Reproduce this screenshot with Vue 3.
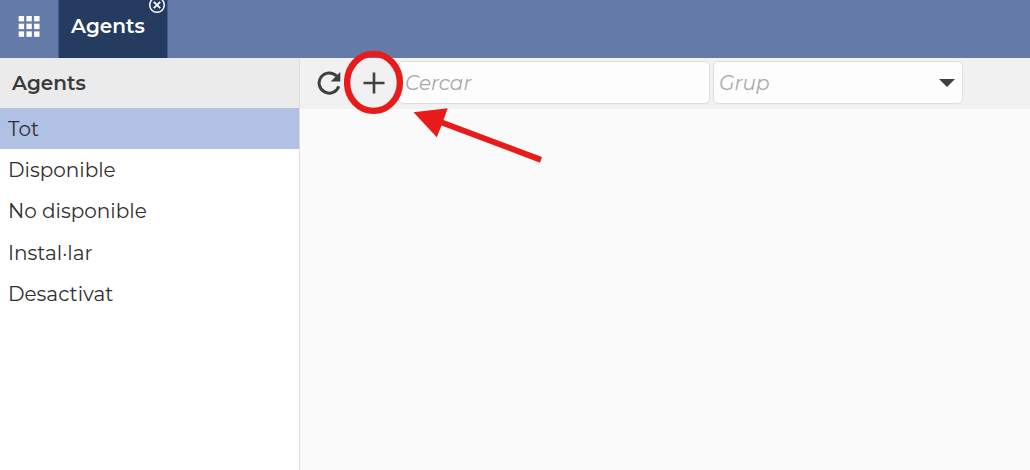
<script setup>
import { ref } from 'vue'

const filters = ['Tot', 'Disponible', 'No disponible', 'Instal·lar', 'Desactivat']
const active = ref('Tot')
const search = ref('')
const group = ref('')
const cells = [0, 7.7, 15.4]
</script>

<template>
  <div class="app">
    <header class="topbar">
      <button class="menu" type="button" aria-label="Menu">
        <svg width="22" height="22" viewBox="0 0 22 22" fill="#fff">
          <template v-for="y in cells" :key="y">
            <rect v-for="x in cells" :key="x" :x="x + 0.7" :y="y" width="5.4" height="5.4" />
          </template>
        </svg>
      </button>
      <div class="tab">
        <button class="tab-label" type="button">Agents</button>
        <button class="close" type="button" aria-label="Close">
          <svg width="18" height="18" viewBox="0 0 18 18" fill="none" stroke="#fff">
            <circle cx="9" cy="9" r="7.3" stroke-width="1.5" />
            <path d="M5.8 5.8L12.2 12.2M12.2 5.8L5.8 12.2" stroke-width="1.8" />
          </svg>
        </button>
      </div>
    </header>
    <div class="body">
      <aside class="sidebar">
        <h1 class="title">Agents</h1>
        <ul class="filters">
          <li v-for="f in filters" :key="f">
            <button type="button" class="filter" :class="{ active: f === active }" @click="active = f">{{ f }}</button>
          </li>
        </ul>
      </aside>
      <main class="main">
        <div class="toolbar">
          <button class="tool" type="button" aria-label="Refresh">
            <svg width="24" height="24" viewBox="0 0 24 24">
              <path d="M19.6 5.1A10.1 10.1 0 1 0 21.8 15.2" fill="none" stroke="#404040" stroke-width="3" />
              <path d="M23.3 1V10.6H13.7Z" fill="#404040" />
            </svg>
          </button>
          <div class="add">
            <button class="tool" type="button" aria-label="Add">
              <svg width="22" height="22" viewBox="0 0 22 22">
                <path d="M11 0.5V21.5M0.5 11H21.5" stroke="#404040" stroke-width="2.6" />
              </svg>
            </button>
            <svg class="callout" width="200" height="114" viewBox="0 0 200 114">
              <ellipse cx="29.5" cy="32.4" rx="26.4" ry="28.5" fill="none" stroke="#e81b1b" stroke-width="6.4" />
              <path d="M69.5 62.2L103.7 58.3L99.5 70L198 107L196 112.7L97.5 75.5L92.8 87.3Z" fill="#e81b1b" />
            </svg>
          </div>
          <input v-model="search" class="field search" type="text" placeholder="Cercar" aria-label="Cercar" />
          <div class="group">
            <select v-model="group" class="field select" aria-label="Grup">
              <option value="">Grup</option>
            </select>
            <svg class="caret" width="16" height="8" viewBox="0 0 16 8">
              <path d="M0 0H16L8 8Z" fill="#404040" />
            </svg>
          </div>
        </div>
      </main>
    </div>
  </div>
</template>

<style>
body {
  margin: 0;
}
</style>

<style scoped>
.app {
  display: flex;
  flex-direction: column;
  min-height: 100vh;
  background: #fafafa;
  color: #303030;
  font-family: Montserrat, Inter, "Open Sans", sans-serif;
  font-size: 20px;
}
button {
  margin: 0;
  padding: 0;
  border: 0;
  background: none;
  color: inherit;
  font: inherit;
  cursor: pointer;
}
svg {
  display: block;
}
.topbar {
  display: flex;
  height: 58px;
  background: #647aa9;
}
.menu {
  display: flex;
  align-items: center;
  justify-content: center;
  width: 58px;
  padding-bottom: 4px;
}
.tab {
  position: relative;
  display: flex;
  box-sizing: border-box;
  border: solid #3e5e97;
  border-width: 0 1px;
  background: #253b60;
}
.tab-label {
  padding: 0 22px 6px 12px;
  color: #fff;
  font-weight: 600;
}
.close {
  position: absolute;
  top: -4px;
  right: 1px;
}
.body {
  display: flex;
  flex: 1;
}
.sidebar {
  box-sizing: border-box;
  width: 300px;
  flex: none;
  border-right: 1px solid #dedede;
  background: #fff;
}
.title {
  margin: 0;
  padding: 0 12px;
  background: #ebebeb;
  color: #3a3a3a;
  font-size: 20px;
  font-weight: 600;
  line-height: 50px;
}
.filters {
  display: grid;
  grid-auto-rows: 1fr;
  height: 207px;
  margin: 0;
  padding: 0;
  list-style: none;
}
.filters li {
  display: flex;
}
.filter {
  flex: 1;
  padding: 0 8px;
  text-align: left;
}
.active {
  background: #b0c1e5;
}
.main {
  flex: 1;
  min-width: 0;
}
.toolbar {
  display: flex;
  align-items: center;
  padding: 3px 67px 5px 6px;
  background: #f1f1f1;
}
.tool {
  display: flex;
  align-items: center;
  justify-content: center;
  width: 45px;
  height: 43px;
}
.add {
  position: relative;
}
.callout {
  position: absolute;
  top: -11px;
  left: -7px;
  z-index: 1;
  pointer-events: none;
}
.field {
  box-sizing: border-box;
  width: 100%;
  height: 43px;
  margin: 0;
  padding: 0 6px;
  border: 1px solid #dedede;
  border-radius: 5px;
  outline: 0;
  background: #fdfdfd;
  color: #aaa;
  font: inherit;
  font-style: italic;
  appearance: none;
}
.field::placeholder {
  color: #aaa;
  opacity: 1;
}
.search {
  flex: 1;
  min-width: 0;
  margin: 0 3px 0 2px;
}
.select {
  padding: 0 5px;
}
.group {
  position: relative;
  flex: none;
  width: 250px;
}
.caret {
  position: absolute;
  top: 18px;
  right: 8px;
  pointer-events: none;
}
</style>
